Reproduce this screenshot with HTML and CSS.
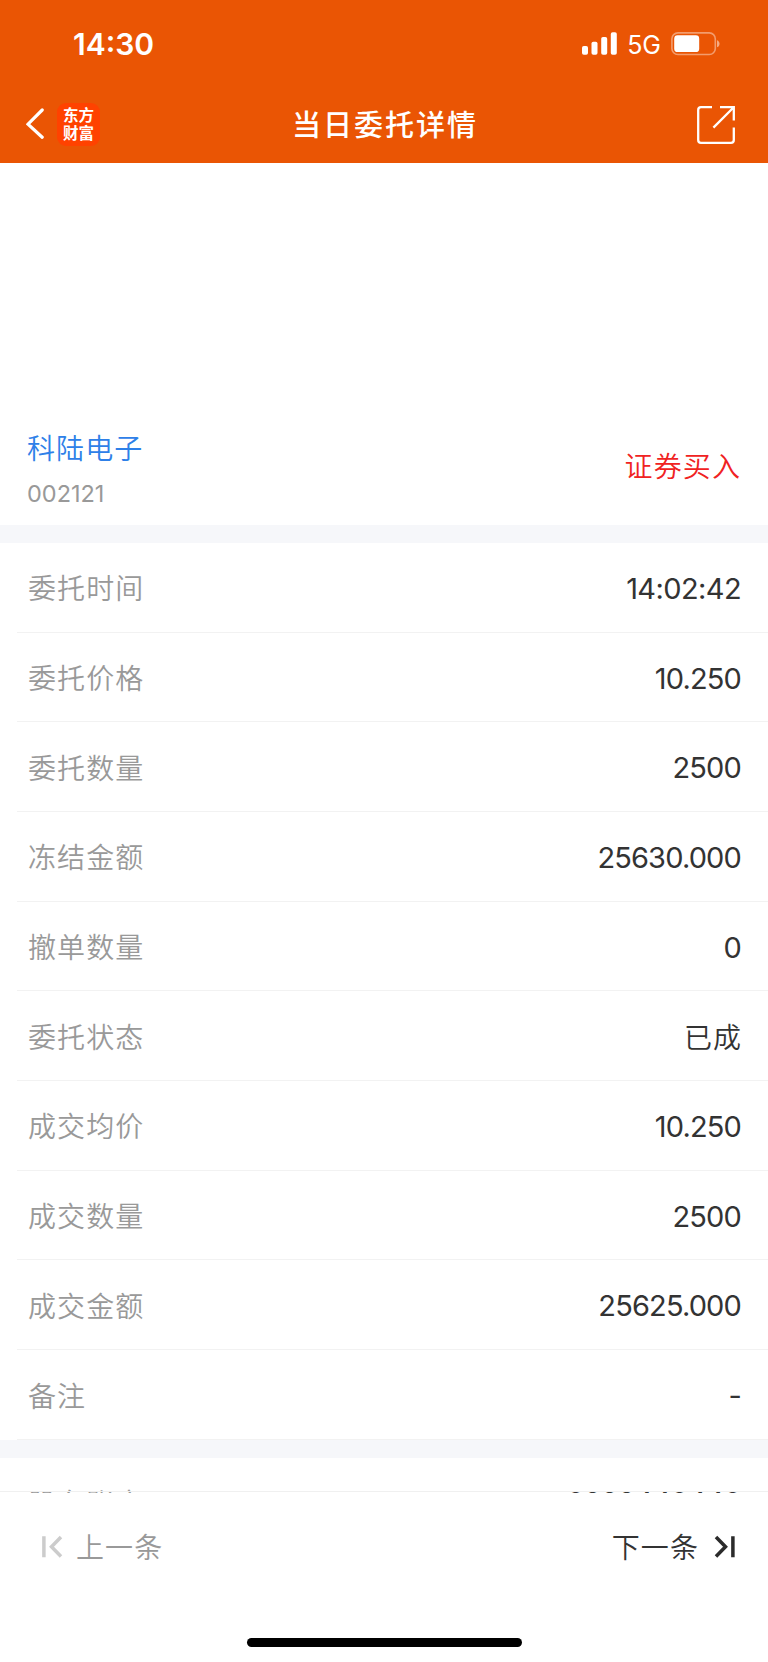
FILE: index.html
```html
<!DOCTYPE html>
<html lang="zh-CN">
<head>
<meta charset="utf-8">
<title>当日委托详情</title>
<link rel="stylesheet" href="styles.css">
</head>
<body>
<div class="screen">
  <header class="top">
    <div class="status">
      <span class="clock">14:30</span>
      <div class="signals">
        <svg width="36" height="24" viewBox="0 0 36 24" fill="#fff"><rect x="0" y="14" width="6" height="8.7" rx="1.8"/><rect x="9.5" y="9.8" width="6" height="12.9" rx="1.8"/><rect x="19.2" y="5" width="6" height="17.7" rx="1.8"/><rect x="28.8" y="0.3" width="6" height="22.4" rx="1.8"/></svg>
        <span class="net">5G</span>
        <svg class="battery" width="50" height="24" viewBox="0 0 50 24"><rect x="0.9" y="0.9" width="43.4" height="21.6" rx="6" fill="none" stroke="#fff" stroke-opacity=".42" stroke-width="1.6"/><rect x="3.2" y="3.3" width="25" height="16.8" rx="3.4" fill="#fff"/><path d="M46 8.2c3.4 1 3.4 6 0 7z" fill="#fff" fill-opacity=".5"/></svg>
      </div>
    </div>
    <nav class="nav">
      <div class="nav-left">
        <svg width="18" height="32" viewBox="0 0 18 32" fill="none" stroke="#fff" stroke-width="3.2" stroke-linecap="round"><path d="M16.2 2 2 16.2l14.2 13"/></svg>
        <div class="logo"><span>东方</span><span>财富</span></div>
      </div>
      <h1 class="title">当日委托详情</h1>
      <svg class="share" width="38" height="38" viewBox="0 0 38 38" fill="none" stroke="#fff" stroke-width="2.3"><path d="M15 1.2H4Q1.2 1.2 1.2 4V34Q1.2 36.8 4 36.8H34Q36.8 36.8 36.8 34V21.4M23 1.2H36.8V14.4M36.5 1.5 16.4 21.6"/></svg>
    </nav>
  </header>

  <section class="stock">
    <div>
      <div class="name">科陆电子</div>
      <div class="code">002121</div>
    </div>
    <div class="side">证券买入</div>
  </section>

  <main class="rows">
    <div class="row"><span class="label">委托时间</span><span class="value time">14:02:42</span></div>
    <div class="row"><span class="label">委托价格</span><span class="value">10.250</span></div>
    <div class="row"><span class="label">委托数量</span><span class="value">2500</span></div>
    <div class="row"><span class="label">冻结金额</span><span class="value">25630.000</span></div>
    <div class="row"><span class="label">撤单数量</span><span class="value">0</span></div>
    <div class="row"><span class="label">委托状态</span><span class="value cjk">已成</span></div>
    <div class="row"><span class="label">成交均价</span><span class="value">10.250</span></div>
    <div class="row"><span class="label">成交数量</span><span class="value">2500</span></div>
    <div class="row"><span class="label">成交金额</span><span class="value">25625.000</span></div>
    <div class="row"><span class="label">备注</span><span class="value">-</span></div>
  </main>

  <section class="more">
    <div class="row"><span class="label">股东账户</span><span class="value account">0223440440</span></div>
  </section>

  <footer class="pager">
    <div class="pager-bar">
      <div class="prev">
        <svg width="22" height="24" viewBox="0 0 22 24" fill="none" stroke="#ccc" stroke-width="3.5"><path d="M1.9 1.3V22.3M19 2 9.5 11.8 19 21.5"/></svg>
        <span>上一条</span>
      </div>
      <div class="next">
        <span>下一条</span>
        <svg width="22" height="24" viewBox="0 0 22 24" fill="none" stroke="#2b2b2b" stroke-width="3.5"><path d="M18.9 1.3V22.3M2 2 11.5 11.8 2 21.5"/></svg>
      </div>
    </div>
    <div class="home"></div>
  </footer>
</div>
</body>
</html>
```

FILE: styles.css
```css
* { box-sizing: border-box; }
body { margin: 0; background: #fff; font-family: Inter, "Noto Sans CJK SC", sans-serif; }
.screen { width: 768px; height: 1662px; display: flex; flex-direction: column; overflow: hidden; background: #fff; }
.top { height: 163.4px; flex: none; background: #ea5504; color: #fff; }
.status { height: 88px; padding: 0 47px 0 73px; display: flex; justify-content: space-between; align-items: center; }
.clock { font-size: 30px; font-weight: 600; line-height: 36px; }
.signals { display: flex; align-items: center; }
.net { font-size: 25px; line-height: 30px; margin: 2px 10px 0 9px; }
.nav { height: 72px; padding: 0 33px; display: grid; grid-template-columns: 1fr auto 1fr; align-items: center; }
.nav-left { display: flex; align-items: center; gap: 13px; margin: 0 0 0 -7px; }
.logo { width: 43px; height: 43px; border-radius: 9px; background: #ff4200; display: flex; flex-direction: column; align-items: center; justify-content: center; font-family: "Noto Sans CJK SC", sans-serif; font-size: 15.5px; font-weight: 700; line-height: 18px; padding-bottom: 2px; }
.title { margin: 0; padding: 0 0 2px 2px; font-family: "Noto Sans CJK SC", sans-serif; font-size: 29px; font-weight: 500; letter-spacing: 2px; line-height: 40px; }
.share { justify-self: end; margin-top: 2px; }
.stock { flex: none; height: 361.6px; padding: 264px 28px 0 27px; display: flex; justify-content: space-between; }
.name, .side, .label, .cjk, .prev, .next { font-family: "Noto Sans CJK SC", sans-serif; font-size: 28px; letter-spacing: 1.1px; line-height: 40px; font-weight: 350; }
.name { color: #2e80e8; }
.code { font-size: 23.5px; line-height: 30px; color: #999; margin: 12px 0 0 0; }
.side { color: #f02222; margin: 18px -1px 0 0; }
.rows, .more { flex: none; border-top: 18px solid #f6f7fa; padding-left: 17px; }
.row { height: 89.7px; display: flex; align-items: center; justify-content: space-between; padding: 0 27px 0 11px; border-bottom: 1px solid #f2f2f2; }
.label { color: #999; }
.value { font-size: 29px; line-height: 40px; letter-spacing: -0.85px; color: #333; padding-top: 3px; }
.value.time { letter-spacing: -0.6px; }
.value.cjk { font-size: 28px; padding: 0; letter-spacing: 1px; margin-right: -1px; }
.value.account { padding-top: 2px; }
.more { height: 53px; overflow: hidden; position: relative; }
.more::after { content: ""; position: absolute; left: 0; right: 0; bottom: 1px; height: 1px; background: #f0f0f0; }
.pager { flex: 1; position: relative; background: #fff; }
.pager-bar { padding: 34px 32px 0 42px; display: flex; justify-content: space-between; }
.prev, .next { display: flex; align-items: center; }
.prev span, .next span { margin: -1px 0 1px; }
.prev { color: #999; gap: 12px; }
.next { color: #333; gap: 15px; }
.home { width: 275px; height: 9px; border-radius: 5px; background: #000; margin: 71px auto 0; }
```
